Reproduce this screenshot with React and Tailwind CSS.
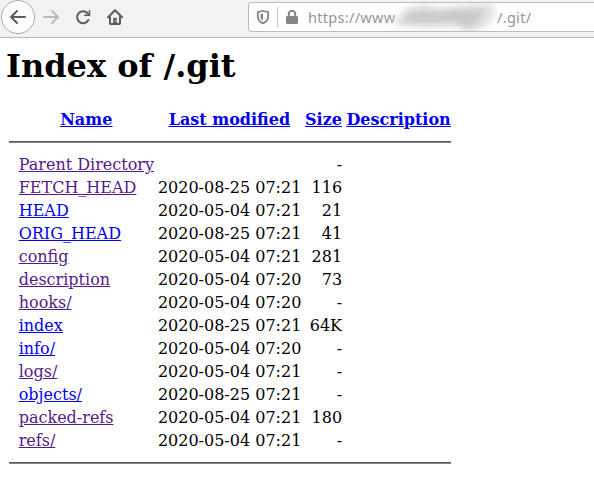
const VISITED = "text-[#551a8b]";
const FRESH = "text-[#0000ee]";

const rows = [
  { name: "Parent Directory", date: "", size: "-", color: VISITED },
  { name: "FETCH_HEAD", date: "2020-08-25 07:21", size: "116", color: VISITED },
  { name: "HEAD", date: "2020-05-04 07:21", size: "21", color: FRESH },
  { name: "ORIG_HEAD", date: "2020-08-25 07:21", size: "41", color: FRESH },
  { name: "config", date: "2020-05-04 07:21", size: "281", color: VISITED },
  { name: "description", date: "2020-05-04 07:20", size: "73", color: VISITED },
  { name: "hooks/", date: "2020-05-04 07:20", size: "-", color: VISITED },
  { name: "index", date: "2020-08-25 07:21", size: "64K", color: FRESH },
  { name: "info/", date: "2020-05-04 07:20", size: "-", color: FRESH },
  { name: "logs/", date: "2020-05-04 07:21", size: "-", color: VISITED },
  { name: "objects/", date: "2020-08-25 07:21", size: "-", color: FRESH },
  { name: "packed-refs", date: "2020-05-04 07:21", size: "180", color: VISITED },
  { name: "refs/", date: "2020-05-04 07:21", size: "-", color: VISITED },
];

const GRID = "grid grid-cols-[135.2px_143px_37.200px_105px] gap-x-1 pl-[9.700px] whitespace-nowrap";

function Arrow({ className }) {
  return (
    <svg viewBox="0 0 16 16" className={className} fill="none" stroke="currentColor" strokeWidth="2" strokeLinecap="round" strokeLinejoin="round">
      <path d="M15 8H1.5M7 2 1 8l6 6" />
    </svg>
  );
}

function Toolbar() {
  return (
    <header className="flex h-[38px] items-start border-b border-[#b8b8b8] bg-[#f3f2f1] text-[#5c5c5b]">
      <div className="ml-px flex size-[34px] shrink-0 items-center justify-center rounded-full border border-[#adadab] bg-[#fdfdfd]">
        <Arrow className="size-4" />
      </div>
      <Arrow className="mt-[9px] ml-2 size-4 shrink-0 rotate-180 text-[#bbbbba]" />
      <svg viewBox="0 0 16 16" className="mt-[9px] ml-4 size-4 shrink-0" fill="none" stroke="currentColor" strokeWidth="2" strokeLinecap="round">
        <path d="M13.400 11A6 6 0 1 1 12.600 4.200L14 5.600" />
        <path d="M15.200 1v6H9.200V5.600h3.400l1.200-1.200V1Z" fill="currentColor" stroke="none" />
      </svg>
      <svg viewBox="0 0 16 16" className="mt-[9px] ml-4 size-4 shrink-0" fill="none" stroke="currentColor" strokeWidth="2" strokeLinecap="round" strokeLinejoin="round">
        <path d="M1 8.2 8 1.2l7 7M3 8v6.2q0 .8.8.8h8.4q.8 0 .8-.8V8" />
        <path d="M6.200 15V9.800q0-1 1-1h1.600q1 0 1 1V15" fill="currentColor" stroke="none" />
        <path d="M8.500 11.500v.8" stroke="#f3f2f1" strokeWidth=".8" />
      </svg>
      <div className="mt-[2px] ml-[125px] flex h-[30px] flex-1 items-center rounded-l-[4px] border border-r-0 border-[#bcbcba] bg-white text-[#858585]">
        <svg viewBox="0 0 16 16" className="ml-[6px] size-4 shrink-0" fill="none" stroke="currentColor" strokeWidth="1.8" strokeLinejoin="round">
          <path d="M8 1.7c2 .9 3.6 1.1 5.200 1.200v4.200c0 3.600-2 6-5.200 7.200-3.200-1.200-5.200-3.600-5.200-7.200V2.900C4.400 2.800 6 2.600 8 1.700Z" />
          <path d="M8 4.500v7C6.200 10.500 5.400 9 5.400 7V5Z" fill="currentColor" stroke="none" />
        </svg>
        <div className="ml-[6px] h-[21px] w-px shrink-0 bg-[#c4c4c4]" />
        <svg viewBox="0 0 14 16" className="ml-[7px] h-4 w-[14px] shrink-0">
          <path d="M3.800 8V5a3.200 3.200 0 0 1 6.400 0v3" fill="none" stroke="currentColor" strokeWidth="2" />
          <rect x="1" y="7" width="12" height="8" rx="1.300" fill="currentColor" />
        </svg>
        <div className="ml-[9px] flex h-[28px] items-center font-['Noto_Sans',sans-serif] text-[14.500px] leading-5 whitespace-nowrap text-[#969696]">
          <span className="w-[83px] tracking-[0.300px]">https://www</span>
          <svg viewBox="0 0 106 28" className="relative h-[28px] w-[106px] shrink-0">
            <defs>
              <filter id="smudge" x="-20%" y="-40%" width="140%" height="180%">
                <feGaussianBlur stdDeviation="3" />
              </filter>
            </defs>
            <g filter="url(#smudge)">
              <path d="M1 22 14 5l17-3 23 2 22-3 26-1 3 10-10 14-12 5-18-5-29 1Z" fill="#e2e2e2" />
              <path d="m9 20 12-12 15-1 10 3 12-3 15 0 20-1-5 12-12 8-13-7-24 1Z" fill="#c9c9c9" />
            </g>
          </svg>
          <span className="tracking-[0.300px]">/.git/</span>
        </div>
      </div>
    </header>
  );
}

export default function App() {
  return (
    <div className="h-[485px] w-[594px] overflow-hidden bg-white font-['DejaVu_Serif',serif] text-[16px] leading-[23px] text-black">
      <Toolbar />
      <main className="pl-[9px]">
        <h1 className="-ml-[3px] pt-[9px] text-[32px] leading-[38px] font-bold">Index of /.git</h1>
        <div className={`${GRID} mt-[23px] text-center font-bold text-[#0000ee] underline`}>
          <a>Name</a>
          <a>Last modified</a>
          <a>Size</a>
          <a>Description</a>
        </div>
        <hr className="mt-[10px] h-[2px] w-[442px] border-t border-b border-t-[#555555] border-b-[#858585]" />
        <div className="mt-[10px]">
          {rows.map((r) => (
            <div key={r.name} className={GRID}>
              <a className={`underline ${r.color}`}>{r.name}</a>
              <span>{r.date}</span>
              <span className="text-right">{r.size}</span>
            </div>
          ))}
        </div>
        <hr className="mt-[10px] h-[2px] w-[442px] border-t border-b border-t-[#555555] border-b-[#858585]" />
      </main>
    </div>
  );
}
